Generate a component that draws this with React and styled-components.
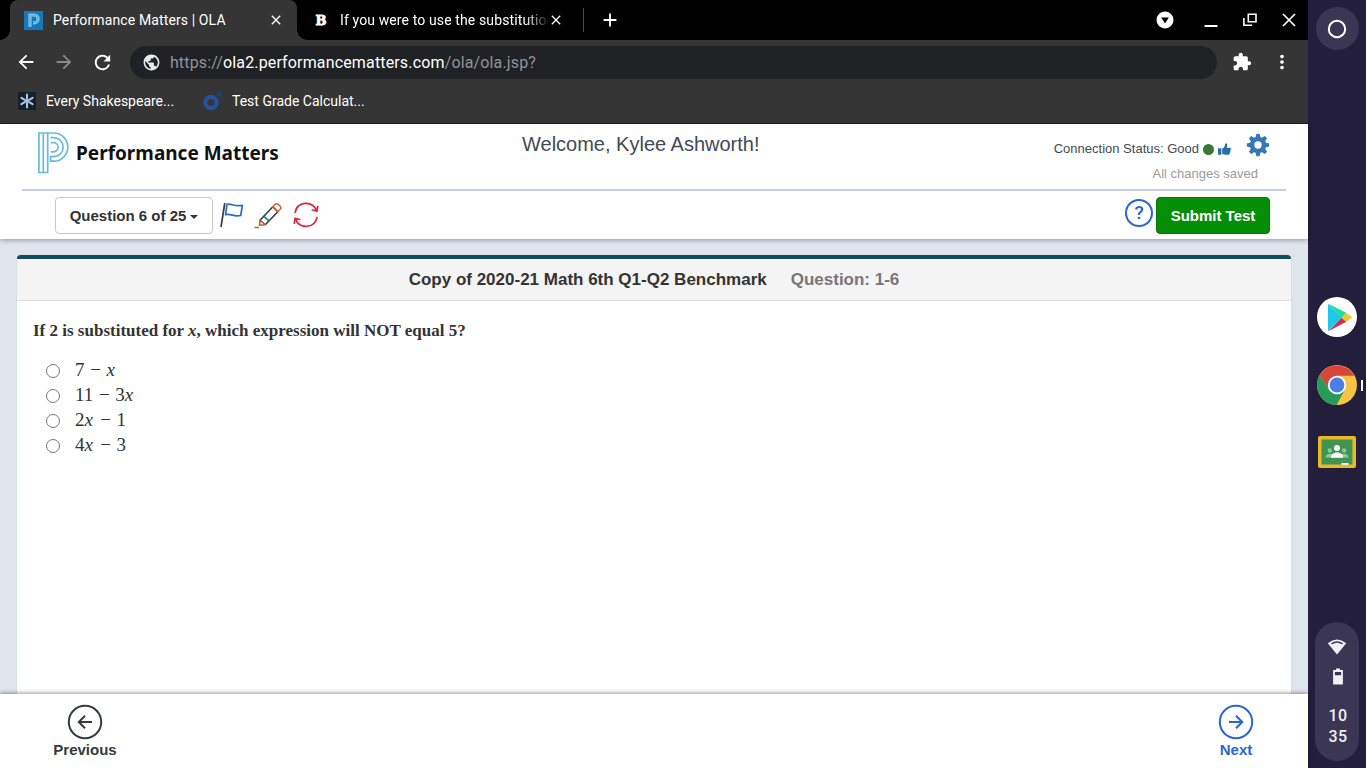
import React, { useState } from "react";
import styled, { createGlobalStyle } from "styled-components";
import {
  MdAdd,
  MdArrowBack,
  MdArrowForward,
  MdClose,
  MdExtension,
  MdMoreVert,
  MdPublic,
  MdRefresh,
} from "react-icons/md";

const answers = [
  { id: "a", parts: ["7", "−", "x"] },
  { id: "b", parts: ["11", "−", "3x"] },
  { id: "c", parts: ["2x", "−", "1"] },
  { id: "d", parts: ["4x", "−", "3"] },
];

export default function App() {
  return (
    <>
      <GlobalStyle />
      <Screen>
        <Browser>
          <TabStrip />
          <AddressBar />
          <Bookmarks />
          <TestPage />
        </Browser>
        <Shelf />
      </Screen>
    </>
  );
}

function TabStrip() {
  return (
    <Tabs>
      <ActiveTab>
        <PowerSchoolFavicon />
        <TabTitle $width={215}>Performance Matters | OLA</TabTitle>
        <MdClose size={16} />
      </ActiveTab>
      <Tab>
        <BrainlyMark>B</BrainlyMark>
        <TabTitle $width={208} $fade>
          If you were to use the substitution
        </TabTitle>
        <MdClose size={16} />
      </Tab>
      <NewTab>
        <MdAdd size={22} />
      </NewTab>
      <WindowButtons>
        <svg width="18" height="18" viewBox="0 0 18 18">
          <circle cx="9" cy="9" r="8.5" fill="#fff" />
          <path d="M5.2 6.5h7.6L9 12.5z" fill="#000" />
        </svg>
        <svg width="14" height="18" viewBox="0 0 14 18">
          <path d="M.5 15h13" stroke="#fff" strokeWidth="2" />
        </svg>
        <svg width="14" height="18" viewBox="0 0 14 18" fill="none" stroke="#fff" strokeWidth="1.6">
          <path d="M5.3 3.3h7.7v7.4H5.3zM.9 7v7.3h8.3" />
        </svg>
        <svg width="14" height="18" viewBox="0 0 14 18" stroke="#fff" strokeWidth="1.7">
          <path d="M1 3l12 12M13 3L1 15" />
        </svg>
      </WindowButtons>
    </Tabs>
  );
}

function AddressBar() {
  return (
    <AddressRow>
      <NavButtons>
        <MdArrowBack size={22} color="#fff" />
        <MdArrowForward size={22} color="#8a8a8a" />
        <MdRefresh size={23} color="#fff" />
      </NavButtons>
      <Omnibox>
        <MdPublic size={19} color="#e8eaed" />
        <Url>
          https://<b>ola2.performancematters.com</b>/ola/ola.jsp?
        </Url>
      </Omnibox>
      <MdExtension size={20} />
      <MdMoreVert size={22} />
    </AddressRow>
  );
}

function Bookmarks() {
  return (
    <BookmarkRow>
      <Bookmark $width={184}>
        <svg width="18" height="18" viewBox="0 0 18 18">
          <rect width="18" height="18" fill="#16202d" />
          <g stroke="#a9c9e6" strokeWidth="2" strokeLinecap="round">
            <path d="M9 2.5v4M9 11.5v4M3.4 5.8l3.4 2M11.2 10.2l3.4 2M3.4 12.2l3.4-2M11.2 7.8l3.4-2" />
          </g>
          <circle cx="9" cy="9" r="2" fill="#a9c9e6" />
        </svg>
        Every Shakespeare...
      </Bookmark>
      <Bookmark>
        <svg width="20" height="20" viewBox="0 0 20 20">
          <circle cx="9" cy="11.5" r="5.7" fill="none" stroke="#24509c" strokeWidth="4.2" />
          <circle cx="17.3" cy="3" r="2.6" fill="#1d4175" />
        </svg>
        Test Grade Calculat...
      </Bookmark>
    </BookmarkRow>
  );
}

function TestPage() {
  return (
    <Page>
      <PageTop>
        <Header>
          <Brand>
            <PowerSchoolLogo />
            <BrandName>Performance Matters</BrandName>
          </Brand>
          <Welcome>Welcome, Kylee Ashworth!</Welcome>
          <Account>
            <StatusColumn>
              <Connection>
                Connection Status: Good
                <StatusDot />
                <ThumbIcon />
              </Connection>
              <Saved>All changes saved</Saved>
            </StatusColumn>
            <GearIcon />
          </Account>
        </Header>
        <Toolbar>
          <QuestionSelect>
            Question 6 of 25
            <Caret />
          </QuestionSelect>
          <Tools>
            <FlagIcon />
            <PencilIcon />
            <ResetIcon />
          </Tools>
          <HelpButton>?</HelpButton>
          <SubmitButton>Submit Test</SubmitButton>
        </Toolbar>
      </PageTop>
      <Content>
        <QuestionPanel />
      </Content>
      <Footer>
        <StepButton $color="#343b42">
          <StepIcon direction="left" />
          Previous
        </StepButton>
        <StepButton $color="#2766d3">
          <StepIcon direction="right" />
          Next
        </StepButton>
      </Footer>
    </Page>
  );
}

function QuestionPanel() {
  const [selected, setSelected] = useState(null);

  return (
    <Panel>
      <PanelHeader>
        <span>Copy of 2020-21 Math 6th Q1-Q2 Benchmark</span>
        <QuestionNumber>Question: 1-6</QuestionNumber>
      </PanelHeader>
      <PanelBody>
        <Prompt>
          If 2 is substituted for <em>x</em>, which expression will NOT equal 5?
        </Prompt>
        {answers.map(({ id, parts }) => (
          <Answer key={id}>
            <Radio
              type="radio"
              name="answer"
              checked={selected === id}
              onChange={() => setSelected(id)}
            />
            <Expression>
              {parts.map((part, i) => (
                <Term key={i} $operator={part === "−"}>
                  {part.replace("x", "")}
                  {part.includes("x") && <Variable>x</Variable>}
                </Term>
              ))}
            </Expression>
          </Answer>
        ))}
      </PanelBody>
    </Panel>
  );
}

function Shelf() {
  return (
    <ShelfBar>
      <Launcher>
        <svg width="20" height="20" viewBox="0 0 20 20">
          <circle cx="10" cy="10" r="8.2" fill="none" stroke="#fff" strokeWidth="2" />
        </svg>
      </Launcher>
      <Apps>
        <PlayStoreIcon />
        <ActiveApp>
          <ChromeIcon />
          <ActiveMark />
        </ActiveApp>
        <ClassroomIcon />
      </Apps>
      <StatusTray>
        <svg width="20" height="16" viewBox="0 0 20 16">
          <path d="M10 15.5L.8 4.2Q10-3.2 19.2 4.2z" fill="#f1f0f6" />
          <path d="M4.4 4.9Q10 1.2 15.6 4.9" fill="none" stroke="#3b3654" strokeWidth="1.5" />
        </svg>
        <svg width="12" height="17" viewBox="0 0 12 17">
          <path d="M4 .5h4v1.6h2.9v14.4H1.1V2.1H4z" fill="#f1f0f6" />
          <path d="M2.9 4h6.2v3.2H2.9z" fill="#3b3654" />
        </svg>
        <Clock>
          <span>10</span>
          <span>35</span>
        </Clock>
      </StatusTray>
    </ShelfBar>
  );
}

function PowerSchoolFavicon() {
  return (
    <svg width="19" height="19" viewBox="0 0 19 19">
      <rect width="19" height="19" fill="#1478bd" />
      <path d="M6 16V4h4.2a3.9 3.9 0 0 1 0 7.8H9" fill="none" stroke="#8fc3ea" strokeWidth="3.2" />
      <path d="M6 16V4h4.2a3.9 3.9 0 0 1 0 7.8H9" fill="none" stroke="#4b9bd2" strokeWidth=".8" />
    </svg>
  );
}

function PowerSchoolLogo() {
  return (
    <svg width="31" height="42" viewBox="0 0 31 42" fill="none" stroke="#69bbda" strokeWidth="1.7">
      <path d="M.9 41V1h14.8a14 14 0 0 1 0 28.2h-3.2v-4.6h3.2a9.4 9.4 0 0 0 0-18.9H12.5M.9 40.5h8.8V1M5.3 1v39.5" />
      <path d="M9.7 5.7h6M12.8 10.3h2.9a4.9 4.9 0 0 1 0 9.8h-2.9v-4.6h2.6v-5.2" stroke="none" />
      <path d="M12.8 10.6h2.7a4.6 4.6 0 0 1 0 9.2h-2.7" />
    </svg>
  );
}

function ThumbIcon() {
  return (
    <svg width="13" height="13" viewBox="0 0 13 13" fill="#2470a5">
      <path d="M0 5.2h3.4v6.5H0zM4.2 5.5C6 4.8 6.8 3.3 7.2 1.2 7.5-.2 9.4.2 9.3 2.1c0 1-.4 1.8-.7 2.7h3.1c1.2 0 1.5 1.2.7 1.9.5.6.3 1.4-.3 1.7.3.7.1 1.3-.5 1.6.2 1-.2 1.8-1.4 1.8H7.4c-1.3 0-2.1-.6-3.2-.7z" />
    </svg>
  );
}

function GearIcon() {
  return (
    <svg width="24" height="24" viewBox="0 0 24 24" fill="#3677b4">
      {[0, 45, 90, 135].map((angle) => (
        <path
          key={angle}
          d="M9.6 4.5l.8-3.7h3.2l.8 3.7v15l-.8 3.7h-3.2l-.8-3.7z"
          transform={`rotate(${angle} 12 12)`}
        />
      ))}
      <circle cx="12" cy="12" r="8.2" />
      <circle cx="12" cy="12" r="3.7" fill="#fff" />
    </svg>
  );
}

function FlagIcon() {
  return (
    <svg width="24" height="26" viewBox="0 0 24 26" fill="none" strokeWidth="1.7">
      <path d="M4.8 1L1 25" stroke="#2f3d49" />
      <path
        d="M7 2.3c4.2-1.4 6.9 2.7 15.4 1l-1.7 10.2c-7.1 1.7-9.3-2.2-15.2-.8z"
        stroke="#2c67d0"
        strokeLinejoin="round"
      />
    </svg>
  );
}

function PencilIcon() {
  return (
    <svg width="29" height="27" viewBox="0 0 29 27" fill="none" strokeWidth="1.6" strokeLinejoin="round">
      <path d="M6 18.2L18.8 4.8l5 5L11.3 22.7" stroke="#2f3d49" />
      <path d="M10 14.4l5.1 4.8" stroke="#22798a" />
      <path d="M18.8 4.8l2.4-2.5q1.5-1.2 3 0l2 2q1.3 1.5 0 3l-2.4 2.5z" stroke="#cf6638" />
      <path d="M6 18.2l-.5 5 5.8-.5zM.5 25.5H5" stroke="#b95d34" />
    </svg>
  );
}

function ResetIcon() {
  return (
    <svg width="26" height="26" viewBox="0 0 26 26" fill="none" stroke="#d9263d" strokeWidth="1.7">
      <path d="M2 10.8C4.2-.6 19-2.2 23.5 8.5M24.8 3.8l-.9 5.4-5.2-1.4" />
      <path d="M24.2 14.8C22 26.2 7 27.8 2.5 17.1M1.2 21.8l.9-5.4 5.2 1.4" />
    </svg>
  );
}

function StepIcon({ direction }) {
  return (
    <svg width="36" height="36" viewBox="0 0 36 36" fill="none" stroke="currentColor" strokeWidth="2">
      <circle cx="18" cy="18" r="16.2" />
      <path d={direction === "left" ? "M25 18H11.8M18 11.8L11.8 18l6.2 6.2" : "M11 18h13.2M18 11.8l6.2 6.2-6.2 6.2"} />
    </svg>
  );
}

function PlayStoreIcon() {
  return (
    <svg width="40" height="40" viewBox="0 0 40 40">
      <circle cx="20" cy="20" r="20" fill="#fff" />
      <path d="M11 7v27l14-13.5z" fill="#1cc8ec" />
      <path d="M11 6.5L29.5 16l-4.8 4.7z" fill="#20df91" />
      <path d="M11 34.5l13.7-13.8 4.6 4z" fill="#d92b4b" />
      <path d="M29.3 15.9l6 4.3-6 4.6-4.7-4.3z" fill="#f6c52e" />
    </svg>
  );
}

function ChromeIcon() {
  return (
    <svg width="40" height="40" viewBox="0 0 40 40">
      <circle cx="20" cy="20" r="20" fill="#f6c344" />
      <path d="M2.7 10A20 20 0 0 1 37.3 10.8H20L12 24.6z" fill="#d8453a" />
      <path d="M2.7 10A20 20 0 0 0 19.6 40L28 24.6H12z" fill="#279b57" />
      <circle cx="20" cy="20" r="9.2" fill="#fff" />
      <circle cx="20" cy="20" r="7.4" fill="#4b7fe8" />
    </svg>
  );
}

function ClassroomIcon() {
  return (
    <svg width="38" height="32" viewBox="0 0 38 32">
      <rect width="38" height="32" rx="2" fill="#e9b92c" />
      <path d="M3.5 3.5h31v25h-31z" fill="#419450" />
      <g fill="#8fc79a">
        <circle cx="11.8" cy="14.5" r="2.2" />
        <circle cx="26.2" cy="14.5" r="2.2" />
        <path d="M7.5 21.5c0-5 8.6-5 8.6 0zM21.9 21.5c0-5 8.6-5 8.6 0z" />
      </g>
      <circle cx="19" cy="12" r="3" fill="#fff" />
      <path d="M12.8 21.7c0-6.8 12.4-6.8 12.4 0z" fill="#fff" />
      <path d="M23.5 27h7v1.8h-7z" fill="#fff" />
    </svg>
  );
}

const GlobalStyle = createGlobalStyle`
  * {
    box-sizing: border-box;
  }

  body {
    margin: 0;
    overflow: hidden;
    font-family: "Liberation Sans", Arial, sans-serif;
  }

  svg {
    display: block;
    flex-shrink: 0;
  }
`;

const Screen = styled.div`
  display: flex;
  width: 1366px;
  height: 768px;
`;

const Browser = styled.div`
  display: flex;
  flex-direction: column;
  width: 1308px;
  background-color: #353535;
  color: #fff;
`;

const Tabs = styled.div`
  display: flex;
  align-items: center;
  height: 40px;
  padding-left: 10px;
  background-color: #000;
  font-family: Roboto, sans-serif;
  font-size: 14px;
`;

const Tab = styled.div`
  display: flex;
  align-items: center;
  height: 24px;
  width: 287px;
  padding-left: 15px;
  border-right: 1px solid #4b4b4b;
`;

const ActiveTab = styled(Tab)`
  position: relative;
  height: 40px;
  padding-left: 14px;
  border-right: 0;
  border-radius: 8px 8px 0 0;
  background-color: #353535;

  &::before,
  &::after {
    content: "";
    position: absolute;
    bottom: 0;
    width: 10px;
    height: 10px;
  }

  &::before {
    left: -10px;
    background: radial-gradient(circle at 0 0, transparent 9.5px, #353535 10px);
  }

  &::after {
    right: -10px;
    background: radial-gradient(circle at 100% 0, transparent 9.5px, #353535 10px);
  }
`;

const TabTitle = styled.span`
  width: ${({ $width }) => $width}px;
  margin-left: 10px;
  overflow: hidden;
  white-space: nowrap;
  letter-spacing: 0.12px;
  ${({ $fade }) => $fade && "mask-image: linear-gradient(90deg, #000 185px, transparent 210px);"}
`;

const BrainlyMark = styled.span`
  width: 18px;
  font-family: "DejaVu Serif", serif;
  font-size: 13px;
  font-weight: 700;
  text-align: center;
  -webkit-text-stroke: 0.8px #fff;
`;

const NewTab = styled.div`
  margin-left: 15px;
`;

const WindowButtons = styled.div`
  display: flex;
  align-items: center;
  gap: 25px;
  margin-left: auto;
  padding-right: 12px;

  svg:first-child {
    margin-right: 5px;
  }
`;

const AddressRow = styled.div`
  display: flex;
  align-items: center;
  height: 44px;
  padding: 0 15px;
  font-family: Roboto, sans-serif;

  > svg:last-child {
    margin-left: 19px;
  }
`;

const NavButtons = styled.div`
  display: flex;
  align-items: center;
  gap: 16px;
  width: 115px;
`;

const Omnibox = styled.div`
  display: flex;
  align-items: center;
  width: 1088px;
  height: 33px;
  margin-right: 15px;
  padding-left: 12px;
  border-radius: 17px;
  background-color: #202124;
`;

const Url = styled.span`
  margin-left: 9px;
  color: #919396;
  font-size: 16px;
  letter-spacing: 0.15px;

  b {
    color: #fff;
    font-weight: 400;
  }
`;

const BookmarkRow = styled.div`
  display: flex;
  align-items: center;
  height: 40px;
  padding: 0 0 6px 18px;
  border-bottom: 1px solid #202020;
`;

const Bookmark = styled.div`
  display: flex;
  align-items: center;
  gap: 10px;
  width: ${({ $width }) => ($width ? `${$width}px` : "auto")};
  font-family: Roboto, sans-serif;
  font-size: 14px;
`;

const Page = styled.div`
  display: flex;
  flex: 1;
  flex-direction: column;
  min-height: 0;
  background-color: #e0e4ec;
  color: #333;
`;

const PageTop = styled.div`
  position: relative;
  height: 115px;
  padding: 0 22px;
  background-color: #fff;
  box-shadow: 0 1px 5px rgba(0, 0, 0, 0.35);
`;

const Header = styled.header`
  display: grid;
  grid-template-columns: 500px 1fr 260px;
  height: 67px;
  border-bottom: 2px solid #c5d1e2;
`;

const Brand = styled.div`
  display: flex;
  padding: 8px 0 0 16px;
`;

const BrandName = styled.span`
  margin: 8px 0 0 7px;
  color: #111;
  font-family: "Noto Sans", sans-serif;
  font-size: 19px;
  font-weight: 700;
  line-height: 26px;
`;

const Welcome = styled.div`
  padding-top: 9px;
  color: #434a54;
  font-size: 20px;
  line-height: 23px;
`;

const Account = styled.div`
  display: flex;
  justify-content: flex-end;
  padding: 9px 16px 0 0;
`;

const StatusColumn = styled.div`
  margin-right: -12px;
  white-space: nowrap;
`;

const Connection = styled.div`
  display: flex;
  align-items: center;
  margin-right: 27px;
  padding-top: 8px;
  color: #434a54;
  font-size: 13px;
  line-height: 16px;
`;

const StatusDot = styled.span`
  width: 11px;
  height: 11px;
  margin: 0 4px;
  border-radius: 50%;
  background-color: #377837;
`;

const Saved = styled.div`
  margin-top: 9px;
  color: #9b9b9b;
  font-size: 13px;
  line-height: 16px;
  text-align: right;
`;

const Toolbar = styled.div`
  display: flex;
  align-items: center;
  height: 48px;
  padding: 0 16px 0 33px;
`;

const QuestionSelect = styled.button`
  display: flex;
  align-items: center;
  justify-content: center;
  width: 158px;
  height: 37px;
  margin-top: 1px;
  border: 1px solid #c8c8c8;
  border-radius: 4px;
  background-color: #fff;
  color: #333;
  font: 700 15px "Liberation Sans", sans-serif;
  white-space: nowrap;
`;

const Caret = styled.span`
  margin: 3px 0 0 4px;
  border: 4px solid transparent;
  border-top-color: #333;
  border-bottom: 0;
`;

const Tools = styled.div`
  display: flex;
  align-items: center;
  gap: 10px;
  margin-left: 7px;
`;

const HelpButton = styled.button`
  width: 28px;
  height: 28px;
  margin: 0 3px 4px auto;
  padding: 0;
  border: 2px solid #2766d3;
  border-radius: 50%;
  background-color: #fff;
  color: #2766d3;
  font: 500 19px/24px Roboto, sans-serif;
`;

const SubmitButton = styled.button`
  width: 114px;
  height: 37px;
  margin-top: 1px;
  padding: 0;
  border: 1px solid #087508;
  border-radius: 4px;
  background-color: #068f06;
  color: #fff;
  font: 700 15px "Liberation Sans", sans-serif;
`;

const Content = styled.main`
  display: flex;
  flex: 1;
  padding: 16px 17px 0;
`;

const Panel = styled.section`
  flex: 1;
  border-top: 4px solid #134b60;
  border-radius: 4px 4px 0 0;
  background-color: #fff;
  box-shadow: 0 0 1px rgba(0, 0, 0, 0.3);
`;

const PanelHeader = styled.div`
  display: flex;
  align-items: center;
  justify-content: center;
  height: 42px;
  border-bottom: 1px solid #ddd;
  background-color: #f4f4f4;
  font-size: 17px;
  font-weight: 700;
`;

const QuestionNumber = styled.span`
  margin-left: 24px;
  color: #777;
`;

const PanelBody = styled.div`
  padding: 19px 16px;
  font-family: "Liberation Serif", serif;
`;

const Prompt = styled.p`
  margin: 0 0 15px;
  font-size: 17px;
  font-weight: 700;
  line-height: 22px;
`;

const Answer = styled.label`
  display: flex;
  align-items: center;
  height: 25px;
`;

const Radio = styled.input`
  width: 14px;
  height: 14px;
  margin: 2px 15px 0 13px;
`;

const Expression = styled.span`
  display: flex;
  font-size: 19px;
  line-height: 22px;
`;

const Term = styled.span`
  ${({ $operator }) => $operator && "width: 22px; text-align: center;"}
`;

const Variable = styled.i`
  display: inline-block;
  width: 10px;
`;

const Footer = styled.footer`
  position: relative;
  display: flex;
  justify-content: space-between;
  height: 74px;
  padding: 10px 35px 0 48px;
  background-color: #fff;
  box-shadow: 0 -1px 4px rgba(0, 0, 0, 0.4);
`;

const StepButton = styled.button`
  display: flex;
  flex-direction: column;
  align-items: center;
  gap: 1px;
  width: 74px;
  padding: 0;
  border: 0;
  background: none;
  color: ${({ $color }) => $color};
  font: 700 15px/18px "Liberation Sans", sans-serif;
`;

const ShelfBar = styled.aside`
  display: flex;
  flex-direction: column;
  align-items: center;
  width: 58px;
  padding: 7px 0;
  background-color: #231e3c;
`;

const Launcher = styled.div`
  display: grid;
  place-items: center;
  width: 43px;
  height: 43px;
  border-radius: 50%;
  background-color: #3b3654;
`;

const Apps = styled.div`
  display: flex;
  flex-direction: column;
  align-items: center;
  width: 100%;
  gap: 28px;
  margin-top: 247px;

  > svg:last-child {
    margin-top: 3px;
  }
`;

const ActiveApp = styled.div`
  display: flex;
  align-items: center;
  justify-content: flex-end;
  gap: 4px;
  width: 100%;
  padding-right: 3px;
`;

const ActiveMark = styled.span`
  width: 2px;
  height: 11px;
  background-color: #fff;
`;

const StatusTray = styled.div`
  display: flex;
  flex-direction: column;
  align-items: center;
  width: 44px;
  height: 139px;
  margin-top: auto;
  padding-top: 17px;
  border-radius: 22px;
  background-color: #3b3654;

  svg + svg {
    margin: 13px 0 0 2px;
  }
`;

const Clock = styled.div`
  display: flex;
  flex-direction: column;
  margin: 20px 0 0 2px;
  color: #f1f0f6;
  font: 500 16px/21px Roboto, sans-serif;
  letter-spacing: 0.5px;
`;
